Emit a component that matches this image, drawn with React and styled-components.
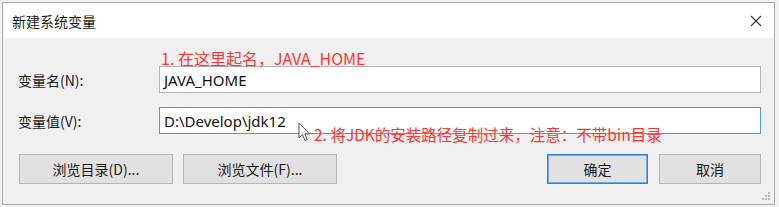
import React from "react";
import styled, { createGlobalStyle } from "styled-components";

const Global = createGlobalStyle`
  html, body { margin: 0; padding: 0; background: #f2f2f2; }
  body { font-family: "Noto Sans CJK SC", "Noto Sans", sans-serif; }
`;

const Page = styled.div`
  width: 779px;
  height: 207px;
  padding: 2px 0 0 2px;
  box-sizing: border-box;
`;

const Window = styled.div`
  position: relative;
  width: 773px;
  height: 203px;
  box-sizing: border-box;
  border: 1px solid #a9a9a9;
  background: #f0f0f0;
  display: flex;
  flex-direction: column;
`;

const TitleBar = styled.div`
  height: 35px;
  background: #ffffff;
  display: flex;
  align-items: center;
  justify-content: space-between;
  padding: 0 12px 0 9px;
  flex-shrink: 0;
`;

const Title = styled.span`
  font-size: 14px;
  color: #1a1a1a;
`;

const Close = styled.svg`
  width: 12px;
  height: 12px;
`;

const Body = styled.div`
  flex: 1;
  display: flex;
  flex-direction: column;
  padding: 28px 13px 0 15px;
`;

const Row = styled.div`
  display: flex;
  align-items: center;
  margin-bottom: ${(p) => p.$mb}px;
`;

const Label = styled.span`
  width: 141px;
  font-size: 14px;
  color: #1a1a1a;
`;

const Input = styled.div`
  flex: 1;
  height: 27px;
  box-sizing: border-box;
  background: #fff;
  border: 1px solid ${(p) => (p.$focus ? "#4a98e6" : "#b4b4b4")};
  display: flex;
  align-items: center;
  padding-left: 4px;
  font-family: "Noto Sans", sans-serif;
  font-size: 15px;
  color: #111;
`;

const ButtonRow = styled.div`
  display: flex;
  align-items: center;
  padding-left: 1px;
`;

const Button = styled.div`
  width: ${(p) => p.$w}px;
  height: 30px;
  box-sizing: border-box;
  background: #e1e1e1;
  border: 1px solid ${(p) => (p.$primary ? "#2f80d6" : "#b5b5b5")};
  box-shadow: ${(p) => (p.$primary ? "inset 0 0 0 1px #6aa8e8" : "none")};
  display: flex;
  align-items: center;
  justify-content: center;
  font-size: 14px;
  color: #1a1a1a;
  margin-right: ${(p) => p.$mr || 0}px;
`;

const Spacer = styled.div`
  flex: 1;
`;

const Note = styled.span`
  position: absolute;
  left: ${(p) => p.$x}px;
  top: ${(p) => p.$y}px;
  font-size: ${(p) => p.$size}px;
  color: #ff3434;
  white-space: nowrap;
  line-height: 1;
`;

const Cursor = styled.svg`
  position: absolute;
  left: 295px;
  top: 119px;
  width: 13px;
  height: 20px;
`;

const Grip = styled.svg`
  position: absolute;
  right: 3px;
  bottom: 3px;
  width: 9px;
  height: 9px;
`;

export default function App() {
  return (
    <>
      <Global />
      <Page>
        <Window>
          <TitleBar>
            <Title>新建系统变量</Title>
            <Close viewBox="0 0 12 12">
              <path d="M1 1 L11 11 M11 1 L1 11" stroke="#333" strokeWidth="1.1" />
            </Close>
          </TitleBar>
          <Body>
            <Row $mb={14}>
              <Label>变量名(N):</Label>
              <Input>JAVA_HOME</Input>
            </Row>
            <Row $mb={20}>
              <Label>变量值(V):</Label>
              <Input $focus>D:\Develop\jdk12</Input>
            </Row>
            <ButtonRow>
              <Button $w={154} $mr={10}>浏览目录(D)...</Button>
              <Button $w={154}>浏览文件(F)...</Button>
              <Spacer />
              <Button $w={101} $primary $mr={11}>确定</Button>
              <Button $w={102}>取消</Button>
            </ButtonRow>
          </Body>
          <Note $x={158} $y={47} $size={16}>1. 在这里起名，JAVA_HOME</Note>
          <Note $x={311} $y={124} $size={15.5}>2. 将JDK的安装路径复制过来，注意：不带bin目录</Note>
          <Cursor viewBox="0 0 13 20">
            <path
              d="M1 1 L1 16 L4.5 12.5 L7 18.5 L9.2 17.6 L6.8 11.8 L11.5 11.8 Z"
              fill="#fff"
              stroke="#555"
              strokeWidth="1"
              strokeLinejoin="round"
            />
          </Cursor>
          <Grip viewBox="0 0 9 9">
            <g fill="#b8b8b8">
              <rect x="6" y="0" width="2" height="2" />
              <rect x="3" y="3" width="2" height="2" />
              <rect x="6" y="3" width="2" height="2" />
              <rect x="0" y="6" width="2" height="2" />
              <rect x="3" y="6" width="2" height="2" />
              <rect x="6" y="6" width="2" height="2" />
            </g>
          </Grip>
        </Window>
      </Page>
    </>
  );
}
